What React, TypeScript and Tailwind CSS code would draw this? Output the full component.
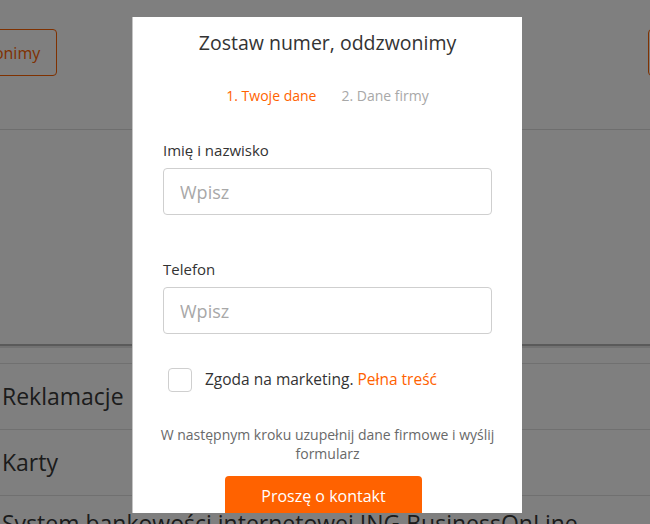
import React from "react";

const font = { fontFamily: '"Open Sans", "Noto Sans", sans-serif' };

function Row({ children }: { children: React.ReactNode }) {
    return (
        <div className="flex h-[66px] items-center border-b border-[#e0e0e0] pl-[2px]">
            <span className="text-[23px] text-[#383838]">{children}</span>
        </div>
    );
}

function Field({ label }: { label: string }) {
    return (
        <div className="flex flex-col">
            <label className="text-[15px] leading-[22px] text-[#333]">{label}</label>
            <input
                placeholder="Wpisz"
                className="mt-[7px] h-[47px] w-full rounded-[4px] border border-[#cfcfcf] px-[16px] text-[18px] text-[#333] outline-none placeholder:text-[#a8a8a8]"
            />
        </div>
    );
}

export default function App() {
    return (
        <div className="relative h-[524px] w-[650px] overflow-hidden bg-white" style={font}>
            {/* page under the overlay */}
            <div className="flex flex-col">
                <div className="flex h-[130px] items-start justify-between border-b border-[#dcdcdc] pt-[29px]">
                    <button className="-ml-[192px] flex h-[47px] items-center rounded-[4px] border border-[#ff6200] pl-[20px] pr-[16px] text-[16px] text-[#ff6200]">
                        Zostaw numer, oddzwonimy
                    </button>
                    <button className="-mr-[200px] flex h-[47px] w-[202px] items-center rounded-[4px] border border-[#ff6200] px-[16px] text-[16px] text-[#ff6200]">
                        Zadzwoń
                    </button>
                </div>
                <div className="h-[214px]" />
                <div className="h-[2px] bg-[#b4b4b4]" />
                <div className="h-[18px] border-t-2 border-b border-t-[#e4e4e4] border-b-[#e0e0e0]" />
                <Row>Reklamacje</Row>
                <Row>Karty</Row>
                <div className="flex h-[66px] items-start pl-[2px] pt-[10px]">
                    <span className="text-[23px] text-[#383838]">System bankowości internetowej ING BusinessOnLine</span>
                </div>
            </div>

            {/* overlay */}
            <div className="absolute inset-0 bg-black/50" />

            {/* modal */}
            <div className="absolute left-[132px] top-[17px] flex h-[496px] w-[390px] flex-col overflow-hidden border-l border-[#c4c4c4] bg-white">
                <h2 className="pt-[12px] text-center text-[19.5px] leading-[28px] text-[#333]">Zostaw numer, oddzwonimy</h2>
                <div className="mt-[29px] flex justify-center gap-[25px] text-[14px] leading-[20px]">
                    <span className="text-[#ff6200]">1. Twoje dane</span>
                    <span className="text-[#a8a8a8]">2. Dane firmy</span>
                </div>
                <div className="mt-[33px] flex flex-col gap-[43px] px-[30px]">
                    <Field label="Imię i nazwisko" />
                    <Field label="Telefon" />
                </div>
                <div className="mt-[34px] flex items-center px-[35px]">
                    <span className="h-[24px] w-[24px] rounded-[4px] border border-[#cfcfcf]" />
                    <span className="ml-[13px] text-[15.5px] text-[#333]">
                        Zgoda na marketing. <span className="text-[#ff6200]">Pełna treść</span>
                    </span>
                </div>
                <p className="mt-[33px] px-[12px] text-center text-[14px] leading-[19px] text-[#696969]">
                    W następnym kroku uzupełnij dane firmowe i wyślij
                    <br />
                    formularz
                </p>
                <div className="mt-[13px] flex justify-center pr-[8px]">
                    <button className="h-[40px] w-[197px] rounded-[4px] bg-[#ff6200] text-[16px] text-white">
                        Proszę o kontakt
                    </button>
                </div>
            </div>
        </div>
    );
}
